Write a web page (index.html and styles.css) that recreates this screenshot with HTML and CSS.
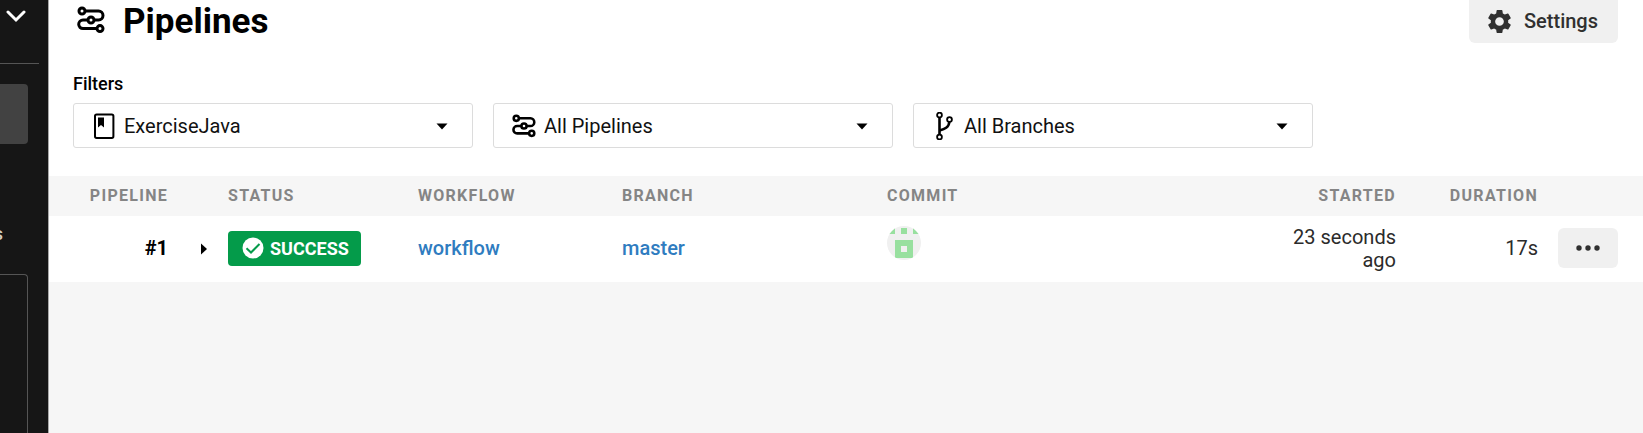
FILE: index.html
```html
<!DOCTYPE html>
<html lang="en">
<head>
<meta charset="utf-8">
<title>Pipelines</title>
<link rel="stylesheet" href="styles.css">
</head>
<body>
<svg class="sprite" aria-hidden="true">
  <symbol id="pipelines" viewBox="0 0 28 28">
    <g fill="none" stroke="currentColor" stroke-width="3">
      <circle cx="5" cy="5" r="3"/>
      <circle cx="14" cy="14" r="3"/>
      <circle cx="23" cy="22.6" r="3"/>
      <path d="M8 5H21.5a4.5 4.500 0 0 1 0 9H17M11 14H6a4.300 4.300 0 0 0 0 8.600H20"/>
    </g>
  </symbol>
</svg>
<div class="app">
  <aside class="sidebar">
    <button class="collapse" aria-label="Toggle menu">
      <svg width="20" height="13" viewBox="0 0 20 13"><path d="M2 2l8 8 8-8" fill="none" stroke="#fff" stroke-width="3" stroke-linecap="round"/></svg>
    </button>
    <div class="nav-active"></div>
    <div class="nav-label">s</div>
    <div class="nav-panel"></div>
  </aside>
  <main class="main">
    <section class="top">
      <header class="page-head">
        <svg class="head-icon" width="28" height="28"><use href="#pipelines"/></svg>
        <h1>Pipelines</h1>
        <button class="btn settings">
          <svg width="29" height="29" viewBox="0 0 24 24" fill="currentColor"><path d="M19.14 12.94c.04-.3.06-.61.06-.94 0-.32-.02-.64-.07-.94l2.03-1.58a.49.49 0 0 0 .12-.61l-1.92-3.32a.49.49 0 0 0-.59-.22l-2.39.96c-.5-.38-1.03-.7-1.62-.94l-.36-2.54a.48.48 0 0 0-.48-.41h-3.84a.48.48 0 0 0-.47.41l-.36 2.54c-.59.24-1.13.57-1.62.94l-2.39-.96a.49.49 0 0 0-.59.22L2.74 8.87a.48.48 0 0 0 .12.61l2.03 1.58c-.05.3-.09.63-.09.94s.02.64.07.94l-2.03 1.58a.49.49 0 0 0-.12.61l1.92 3.32c.12.22.37.29.59.22l2.39-.96c.5.38 1.03.7 1.62.94l.36 2.54c.05.24.24.41.48.41h3.84c.24 0 .44-.17.47-.41l.36-2.54c.59-.24 1.13-.56 1.62-.94l2.39.96c.22.08.47 0 .59-.22l1.92-3.32a.48.48 0 0 0-.12-.61zM12 15.6A3.6 3.6 0 1 1 12 8.4a3.6 3.6 0 0 1 0 7.2z"/></svg>
          Settings
        </button>
      </header>
      <div class="filters-title" id="filters">Filters</div>
      <div class="filters" role="group" aria-labelledby="filters">
        <div class="filter">
          <svg class="lead" width="24" height="28" viewBox="0 0 24 28"><rect x="3" y="2.500" width="18.400" height="23.400" rx="1.600" fill="none" stroke="#000" stroke-width="2"/><path d="M6 5.500h6v10l-3-2.400-3 2.400z"/></svg>
          <select aria-label="Project"><option>ExerciseJava</option></select>
          <svg class="caret" width="12" height="7" viewBox="0 0 12 7"><path d="M.5.5h11L6 6.500z"/></svg>
        </div>
        <div class="filter">
          <svg class="lead" width="24" height="24"><use href="#pipelines"/></svg>
          <select aria-label="Pipeline"><option>All Pipelines</option></select>
          <svg class="caret" width="12" height="7" viewBox="0 0 12 7"><path d="M.5.5h11L6 6.500z"/></svg>
        </div>
        <div class="filter">
          <svg class="lead" width="24" height="28" viewBox="0 0 24 28"><g fill="none" stroke="#000" stroke-width="1.800"><circle cx="7.500" cy="3" r="2.400"/><circle cx="7.500" cy="25" r="2.400"/><circle cx="17.500" cy="7.500" r="2.400"/><path d="M7.500 5.500V22.500" stroke-width="2.600"/><path d="M7.500 18.500C12.500 17 17 15.500 17.300 10" stroke-width="2.600"/></g></svg>
          <select aria-label="Branch"><option>All Branches</option></select>
          <svg class="caret" width="12" height="7" viewBox="0 0 12 7"><path d="M.5.5h11L6 6.500z"/></svg>
        </div>
      </div>
    </section>
    <table class="runs">
      <colgroup><col class="c-id"><col class="c-toggle"><col class="c-status"><col class="c-workflow"><col class="c-branch"><col><col class="c-started"><col class="c-duration"><col class="c-actions"></colgroup>
      <thead>
        <tr><th class="num">Pipeline</th><th></th><th>Status</th><th>Workflow</th><th>Branch</th><th>Commit</th><th class="num">Started</th><th class="num">Duration</th><th></th></tr>
      </thead>
      <tbody>
        <tr>
          <td class="num id">#1</td>
          <td class="num"><button class="expand" aria-label="Expand"><svg width="8" height="12" viewBox="0 0 8 12"><path d="M1 .5v11L7 6z"/></svg></button></td>
          <td><span class="badge"><svg width="22" height="22" viewBox="0 0 22 22"><circle cx="11" cy="11" r="10.500" fill="#fff"/><path d="M4.500 11.300l4.500 4.200 8.500-8.500" fill="none" stroke="#049b4a" stroke-width="2"/></svg>SUCCESS</span></td>
          <td><a href="#workflow">workflow</a></td>
          <td><a href="#master">master</a></td>
          <td><svg class="avatar" width="34" height="34" viewBox="0 0 34 34"><clipPath id="round"><circle cx="17" cy="17" r="17"/></clipPath><g clip-path="url(#round)"><path d="M0 0h34v34H0z" fill="#f0f0f0"/><path d="M2 2h6v6H2zM14 2h6v6h-6zM26 2h6v6h-6zM8 14h18v18H8z" fill="#98e09f"/><path d="M14 20h6v6h-6z" fill="#f0f0f0"/></g></svg></td>
          <td class="num started">23 seconds ago</td>
          <td class="num">17s</td>
          <td><button class="btn more" aria-label="More actions"><svg width="24" height="6" viewBox="0 0 24 6" fill="currentColor"><circle cx="3" cy="3" r="2.700"/><circle cx="12" cy="3" r="2.700"/><circle cx="21" cy="3" r="2.700"/></svg></button></td>
        </tr>
      </tbody>
    </table>
  </main>
</div>
</body>
</html>
```
FILE: styles.css
```css
* { box-sizing: border-box; }
body { margin: 0; font-family: Roboto, sans-serif; font-size: 20px; line-height: 23px; color: #2b2b2b; background: #f6f6f6; }
button, select { font: inherit; color: inherit; border: 0; margin: 0; cursor: pointer; }
svg { display: block; }
.sprite { position: absolute; width: 0; height: 0; }
.app { display: flex; min-height: 100vh; }

.sidebar { flex: none; width: 49px; background: #161616; border-right: 1px solid #a8a8a8; display: flex; flex-direction: column; align-items: flex-start; overflow: hidden; }
.collapse { width: 39px; height: 64px; padding: 10px 0 0 6px; background: none; border-bottom: 1px solid #555; display: flex; align-items: flex-start; }
.nav-active { width: 28px; height: 60px; margin-top: 20px; background: #424242; border-radius: 0 4px 4px 0; }
.nav-label { width: 3px; margin: 78px 0 28px; display: flex; justify-content: flex-end; font-size: 18px; line-height: 24px; font-weight: 500; color: #d6cfc4; }
.nav-panel { flex: 1; width: 28px; border: 1px solid #555; border-width: 1px 1px 0 0; border-radius: 0 4px 0 0; }

.main { flex: 1; min-width: 0; }
.top { background: #fff; padding: 0 25px 28px 24px; }
.page-head { display: flex; align-items: center; height: 43px; }
.head-icon { color: #000; margin: 0 18px 4px 4px; }
h1 { flex: 1; margin: 0; font-size: 35px; line-height: 42px; font-weight: 700; color: #000; }
.btn { display: flex; align-items: center; justify-content: center; background: #f0f0f0; border-radius: 6px; color: #303030; }
.settings { height: 43px; padding: 0 20px 0 16px; gap: 10px; font-weight: 500; border-radius: 0 0 6px 6px; }
.filters-title { margin: 29px 0 8px; font-size: 18px; font-weight: 500; color: #000; }
.filters { display: flex; gap: 20px; }
.filter { position: relative; flex: 0 1 400px; }
.filter select { width: 100%; height: 45px; padding: 2px 40px 0 50px; appearance: none; background: #fff; border: 1px solid #dcdcdc; border-radius: 3px; color: #111; }
.lead, .caret { position: absolute; top: 1px; bottom: 0; margin: auto 0; pointer-events: none; color: #000; }
.lead { left: 19px; }
.caret { right: 25px; }

.runs { width: 100%; border-collapse: collapse; table-layout: fixed; }
.c-id { width: 129px; }
.c-toggle { width: 40px; }
.c-status { width: 190px; }
.c-workflow { width: 204px; }
.c-branch { width: 265px; }
.c-started { width: 130px; }
.c-duration { width: 142px; }
.c-actions { width: 95px; }
th { height: 40px; padding: 0 10px 2px; text-align: left; font-size: 16px; font-weight: 700; letter-spacing: 0.08em; text-transform: uppercase; color: #858585; }
td { height: 66px; padding: 0 10px 2px; background: #fff; }
.started { padding-bottom: 0; }
.num { text-align: right; }
.id { color: #000; font-weight: 700; }
.expand { padding: 0; background: none; vertical-align: middle; }
a { color: #2f7cc0; font-weight: 500; text-decoration: none; }
.badge { display: inline-flex; align-items: center; gap: 6px; height: 35px; padding: 0 12px 0 14px; background: #049b4a; border-radius: 4px; color: #fff; font-size: 18px; font-weight: 700; vertical-align: middle; }
.avatar { margin-bottom: 10px; }
.more { width: 60px; height: 40px; padding: 0; }
```
